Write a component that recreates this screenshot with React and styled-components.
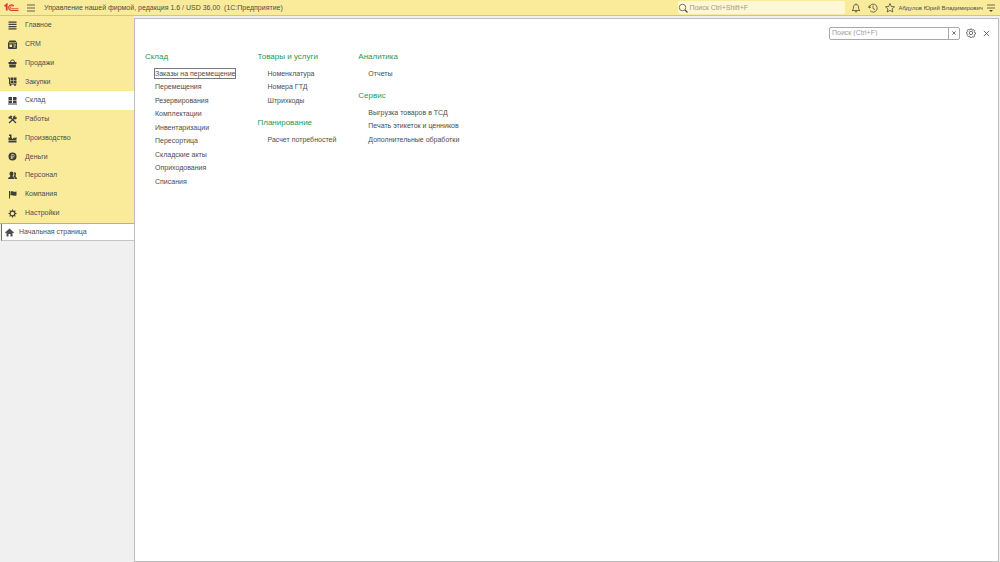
import React from "react";
import styled, { createGlobalStyle } from "styled-components";

const GlobalStyle = createGlobalStyle`
  *, *::before, *::after { box-sizing: border-box; }
  body {
    margin: 0;
    background: #f0f0f0;
    color: #4d4d4d;
    font: 7px/12px "Liberation Sans", Arial, sans-serif;
  }
  button, input { font: inherit; color: inherit; }
  button { border: 0; padding: 0; background: none; cursor: pointer; }
  a { color: inherit; text-decoration: none; }
  ul { list-style: none; margin: 0; padding: 0; }
  svg { display: block; flex: none; }
`;

const Shell = styled.div`
  display: flex;
  flex-direction: column;
  min-height: 100vh;
`;

const TopBar = styled.header`
  display: flex;
  align-items: center;
  height: 16px;
  padding: 0 2px 0 4px;
  background: #faeb9b;
  border-bottom: 1px solid #d3c678;
`;

const IconButton = styled.button`
  display: flex;
  align-items: center;
  justify-content: center;
  width: ${(p) => p.$width || 17}px;
  height: 14px;
  color: #4b4a42;
`;

const AppTitle = styled.h1`
  flex: 1;
  margin: 0 0 0 1px;
  font-size: 7px;
  font-weight: 400;
  white-space: pre;
`;

const GlobalSearch = styled.label`
  display: flex;
  align-items: center;
  width: 167px;
  height: 13px;
  margin-right: 2px;
  background: #fef7d3;
  border-radius: 2px;
  color: #55524a;
`;

const SearchInput = styled.input`
  flex: 1;
  min-width: 0;
  height: 11px;
  padding: 0 0 0 1px;
  border: 0;
  outline: 0;
  background: transparent;
  &::placeholder { color: ${(p) => p.$hint || "#a0a0a0"}; opacity: 1; }
`;

const UserName = styled.button`
  margin-right: 1px;
  font-size: 6px;
  line-height: 12px;
  white-space: nowrap;
`;

const Body = styled.div`
  display: flex;
  flex: 1;
`;

const Sidebar = styled.aside`
  width: 134px;
  flex: none;
`;

const Sections = styled.ul`
  background: #faeb9b;
  border-bottom: 1px solid #b9b07a;
`;

const SectionItem = styled.li`
  height: 19px;
  background: ${(p) => (p.$active ? "#fff" : "transparent")};
  &:nth-child(4n) { height: 18px; }
`;

const SectionLink = styled.a`
  display: flex;
  align-items: center;
  gap: 8px;
  height: 100%;
  padding: 0 0 1px 8px;
  svg { color: #3f3f3c; }
`;

const HomeTab = styled.a`
  display: flex;
  align-items: center;
  gap: 5px;
  height: 17px;
  margin-left: 1px;
  padding-left: 3px;
  background: #fff;
  border-left: 1px solid #1c9a55;
  border-bottom: 1px solid #c4c4c4;
`;

const Workspace = styled.div`
  display: flex;
  flex: 1;
  padding: 2px 1px 0 0;
`;

const Panel = styled.main`
  flex: 1;
  padding: 7px 5px 0 10px;
  background: #fff;
  border: 1px solid #bdbdbd;
`;

const PanelTools = styled.div`
  display: flex;
  justify-content: flex-end;
  align-items: center;
`;

const MenuSearch = styled.form`
  display: flex;
  width: 131px;
  height: 13px;
  margin-right: 2px;
  padding-left: 1px;
  border: 1px solid #a9a9a9;
  border-radius: 2px;
`;

const ClearButton = styled.button`
  display: flex;
  align-items: center;
  justify-content: center;
  width: 11px;
  border-left: 1px solid #a9a9a9;
`;

const MenuColumns = styled.div`
  display: flex;
  align-items: flex-start;
  gap: 21px;
  margin-top: 10px;
`;

const Column = styled.div`
  display: flex;
  flex-direction: column;
  gap: 9px;
`;

const GroupTitle = styled.h2`
  margin: 0 0 2px;
  color: #1c9a55;
  font-size: 8px;
  line-height: 14px;
  font-weight: 400;
`;

const GroupItem = styled.li`
  display: flex;
  align-items: center;
  height: 14px;
  padding-left: 9px;
  &:nth-child(even) { height: 13px; }
`;

const MenuLink = styled.a`
  height: 11px;
  border: 1px solid ${(p) => (p.$focused ? "#77777f" : "transparent")};
  line-height: 9px;
  white-space: nowrap;
`;

const Icon = ({ size = 9, children }) => (
  <svg width={size} height={size} viewBox="0 0 18 18" fill="currentColor" aria-hidden="true">
    {children}
  </svg>
);

const Outline = ({ size = 10, weight = 1.6, children }) => (
  <svg
    width={size}
    height={size}
    viewBox="0 0 20 20"
    fill="none"
    stroke="currentColor"
    strokeWidth={weight}
    strokeLinejoin="round"
    aria-hidden="true"
  >
    {children}
  </svg>
);

const Logo = () => (
  <svg width="15" height="9" viewBox="0 0 30 18" fill="none" stroke="#dc3d2e" aria-label="1С" role="img">
    <path d="M1 6.5 5.5 3v12" strokeWidth="3.6" />
    <path d="M19.5 6.2A5.6 5.6 0 1 0 14.5 15H29" strokeWidth="2.4" />
    <path d="M16.8 7.4A2.5 2.5 0 1 0 14.8 11.5H29" strokeWidth="1.7" />
  </svg>
);

const gearPath =
  "M7.5 1h3l.5 2.3 1.6.7 2-1.3 2 2-1.3 2 .7 1.6 2 .5v2.6l-2 .6-.7 1.5 1.3 2-2 2-2-1.3-1.6.7-.5 2.1h-3L7 15.9l-1.6-.7-2 1.3-2-2 1.3-2L2 11 0 10.4V7.8l2-.5.7-1.6-1.3-2 2-2 2 1.3L7 3.3z";

const sections = [
  { name: "Главное", icon: <path d="M1 1h16v2.4H1zM1 5.5h16v2.4H1zM1 10h16v2.4H1zM1 14.5h16v2.4H1z" /> },
  {
    name: "CRM",
    icon: <path fillRule="evenodd" d="M3 1h12l3 5v10q0 2-2 2H2q-2 0-2-2V6zM2 5h14v1.4H2zM3 9v5h5V9zm8 0v2h5V9zm0 4v2h4v-2z" />,
  },
  {
    name: "Продажи",
    icon: (
      <>
        <path d="M4 7 7 2h4l3 5" fill="none" stroke="currentColor" strokeWidth="1.8" />
        <path d="M1 6h16v4H1zM2 11h14l-1 6H3z" />
      </>
    ),
  },
  {
    name: "Закупки",
    icon: (
      <>
        <path d="M0 2h3v12h14" fill="none" stroke="currentColor" strokeWidth="2" />
        <path d="M5 1h5v5H5zM11 1h6v5h-6zM5 7h5v5H5zM11 7h6v5h-6z" />
        <circle cx="5" cy="16" r="2" />
        <circle cx="14" cy="16" r="2" />
      </>
    ),
  },
  {
    name: "Склад",
    active: true,
    icon: <path d="M1 2h7v6H1zM10 2h7v6h-7zM1 9h7v5H1zM10 9h7v5h-7zM0 15h18v2H0z" />,
  },
  {
    name: "Работы",
    icon: (
      <>
        <path d="m4 4 12 12M15 4 2 16" fill="none" stroke="currentColor" strokeWidth="2.4" />
        <path d="M0 6 5 1l4 2-5 5zM11 2l4-1-1 3 3 1 1-1-1 4-4 1-3-3z" />
      </>
    ),
  },
  {
    name: "Производство",
    icon: <path d="M1 7h3V4H2V1h5v6l2 3 4-4v3l4-3v6H1zM1 13h16v4H1z" />,
  },
  {
    name: "Деньги",
    icon: (
      <>
        <circle cx="9" cy="9" r="8" />
        <path d="M7.5 14V5h2.7a2.3 2.3 0 0 1 0 4.7H5.5M5.5 12h5" fill="none" stroke="#faeb9b" strokeWidth="1.4" />
      </>
    ),
  },
  {
    name: "Персонал",
    icon: (
      <>
        <path d="M7 1c3 0 4 2 4 4s-1 4-2 5c0 2 4 2 4 6H0c0-4 5-4 5-6C4 9 3 7 3 5s1-4 4-4z" />
        <path d="M12 3c3-1 5 1 4 4l-1 3c0 2 3 2 3 6h-4c0-3-2-4-3-5l2-4z" />
      </>
    ),
  },
  { name: "Компания", icon: <path d="M2 2h2v15H2zM5 3c4-2 6 2 12 0v8c-6 2-8-2-12 0z" /> },
  {
    name: "Настройки",
    icon: (
      <>
        <circle cx="9" cy="9" r="4.8" fill="none" stroke="currentColor" strokeWidth="2.4" />
        <path
          d="M9 1v3M9 14v3M1 9h3M14 9h3M3.3 3.3l2 2M12.7 12.7l2 2M14.7 3.3l-2 2M5.3 12.7l-2 2"
          fill="none"
          stroke="currentColor"
          strokeWidth="2.4"
        />
      </>
    ),
  },
];

const columns = [
  [
    {
      title: "Склад",
      items: [
        "Заказы на перемещение",
        "Перемещения",
        "Резервирования",
        "Комплектации",
        "Инвентаризации",
        "Пересортица",
        "Складские акты",
        "Оприходования",
        "Списания",
      ],
    },
  ],
  [
    { title: "Товары и услуги", items: ["Номенклатура", "Номера ГТД", "Штрихкоды"] },
    { title: "Планирование", items: ["Расчет потребностей"] },
  ],
  [
    { title: "Аналитика", items: ["Отчеты"] },
    {
      title: "Сервис",
      items: ["Выгрузка товаров в ТСД", "Печать этикеток и ценников", "Дополнительные обработки"],
    },
  ],
];

const focusedItem = "Заказы на перемещение";

const MenuGroup = ({ title, items }) => (
  <section>
    <GroupTitle>{title}</GroupTitle>
    <ul>
      {items.map((item) => (
        <GroupItem key={item}>
          <MenuLink href="#" $focused={item === focusedItem}>{item}</MenuLink>
        </GroupItem>
      ))}
    </ul>
  </section>
);

export default function App() {
  return (
    <Shell>
      <GlobalStyle />
      <TopBar>
        <Logo />
        <IconButton $width={24} aria-label="Меню">
          <Outline weight={1.7}><path d="M2 4h16M2 10h16M2 16h16" /></Outline>
        </IconButton>
        <AppTitle>{"Управление нашей фирмой, редакция 1.6 / USD 36,00  (1С:Предприятие)"}</AppTitle>
        <GlobalSearch>
          <Outline>
            <circle cx="9" cy="9" r="6.5" />
            <path d="m14 14 5 5" strokeWidth="2.4" />
          </Outline>
          <SearchInput aria-label="Поиск" placeholder="Поиск Ctrl+Shift+F" $hint="#a19c80" />
        </GlobalSearch>
        <IconButton aria-label="Уведомления">
          <Outline>
            <path d="M2 15c3-2 3-4 3-7 0-3 2-5 5-5s5 2 5 5c0 3 0 5 3 7zM8 16c0 3 4 3 4 0M10 1v2" />
          </Outline>
        </IconButton>
        <IconButton aria-label="История">
          <Outline>
            <path d="M2 5v5l4-2M2.5 9A8 8 0 1 1 4 15M10 5v6l4 2" />
          </Outline>
        </IconButton>
        <IconButton aria-label="Избранное">
          <Outline>
            <path d="m10 1 2.7 6 6.3.6-4.8 4.2 1.4 6.2L10 14.8 4.4 18l1.4-6.2L1 7.6 7.3 7z" />
          </Outline>
        </IconButton>
        <UserName>Абдулов Юрий Владимирович</UserName>
        <IconButton $width={14} aria-label="Сервис и настройки">
          <Outline>
            <path d="M2 4h16M2 10h16" />
            <path d="M6 14h8l-4 4z" fill="currentColor" stroke="none" />
          </Outline>
        </IconButton>
      </TopBar>
      <Body>
        <Sidebar>
          <nav aria-label="Разделы">
            <Sections>
              {sections.map(({ name, icon, active }) => (
                <SectionItem key={name} $active={active}>
                  <SectionLink href="#" aria-current={active ? "page" : undefined}>
                    <Icon>{icon}</Icon>
                    {name}
                  </SectionLink>
                </SectionItem>
              ))}
            </Sections>
          </nav>
          <HomeTab href="#">
            <Icon><path d="M9 1 0 9l1.5 1.5L3 9.5V17h4v-5h4v5h4V9.5l1.5 1L18 9z" /></Icon>
            Начальная страница
          </HomeTab>
        </Sidebar>
        <Workspace>
          <Panel>
            <PanelTools>
              <MenuSearch role="search">
                <SearchInput aria-label="Поиск по меню" placeholder="Поиск (Ctrl+F)" />
                <ClearButton type="button" aria-label="Очистить">
                  <Outline size={4} weight={4}><path d="m2 2 16 16M18 2 2 18" /></Outline>
                </ClearButton>
              </MenuSearch>
              <IconButton aria-label="Настройка меню">
                <Outline weight={1.5}>
                  <path d={gearPath} transform="translate(1 .8)" />
                  <circle cx="10" cy="10" r="3.4" />
                </Outline>
              </IconButton>
              <IconButton $width={14} aria-label="Закрыть">
                <Outline size={9} weight={1.8}><path d="m4 4 12 12M16 4 4 16" /></Outline>
              </IconButton>
            </PanelTools>
            <MenuColumns>
              {columns.map((groups) => (
                <Column key={groups[0].title}>
                  {groups.map((group) => <MenuGroup key={group.title} {...group} />)}
                </Column>
              ))}
            </MenuColumns>
          </Panel>
        </Workspace>
      </Body>
    </Shell>
  );
}
